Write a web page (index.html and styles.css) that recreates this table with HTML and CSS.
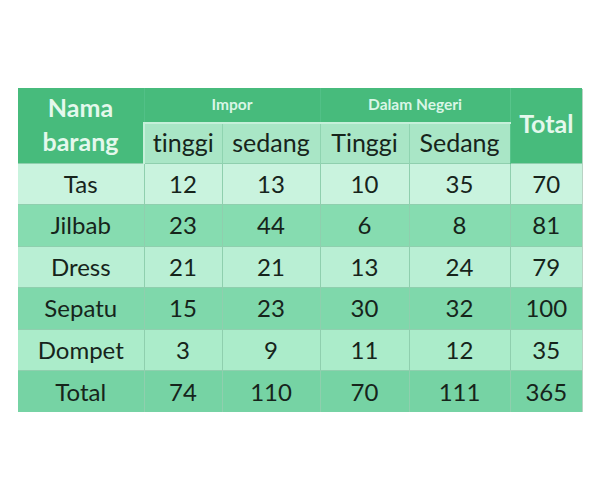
FILE: index.html
```html
<!DOCTYPE html>
<html>
<head>
<meta charset="utf-8">
<link rel="stylesheet" href="styles.css">
</head>
<body>
<div class="page">
<table class="data">
  <colgroup>
    <col class="c-name"><col class="c-a"><col class="c-b"><col class="c-c"><col class="c-d"><col class="c-tot">
  </colgroup>
  <thead>
    <tr class="h1">
      <th rowspan="2" class="hname">Nama<br>barang</th>
      <th colspan="2" class="group">Impor</th>
      <th colspan="2" class="group">Dalam Negeri</th>
      <th rowspan="2" class="htot">Total</th>
    </tr>
    <tr class="h2">
      <th class="sub first">tinggi</th>
      <th class="sub">sedang</th>
      <th class="sub">Tinggi</th>
      <th class="sub last">Sedang</th>
    </tr>
  </thead>
  <tbody>
    <tr class="light1"><td>Tas</td><td>12</td><td>13</td><td>10</td><td>35</td><td>70</td></tr>
    <tr class="dark1"><td>Jilbab</td><td>23</td><td>44</td><td>6</td><td>8</td><td>81</td></tr>
    <tr class="light2"><td>Dress</td><td>21</td><td>21</td><td>13</td><td>24</td><td>79</td></tr>
    <tr class="dark2"><td>Sepatu</td><td>15</td><td>23</td><td>30</td><td>32</td><td>100</td></tr>
    <tr class="light3"><td>Dompet</td><td>3</td><td>9</td><td>11</td><td>12</td><td>35</td></tr>
    <tr class="dark3"><td>Total</td><td>74</td><td>110</td><td>70</td><td>111</td><td>365</td></tr>
  </tbody>
</table>
</div>
</body>
</html>
```
FILE: styles.css
```css
html, body {
  margin: 0;
  padding: 0;
  background: #ffffff;
}
.page {
  padding: 88px 18px 0 18px;
}
.data {
  border-collapse: collapse;
  table-layout: fixed;
  width: 564px;
  font-family: Lato, "Open Sans", sans-serif;
  font-variant-ligatures: none;
  color: #16241b;
  box-shadow: 1px 1px 0 #b9d2c4;
}
.c-name { width: 126px; }
.c-a { width: 78px; }
.c-b { width: 98px; }
.c-c { width: 89px; }
.c-d { width: 101px; }
.c-tot { width: 72px; }

th, td {
  padding: 0;
  text-align: center;
  vertical-align: middle;
}
thead th {
  background: #47bb7c;
}
.h1 { height: 35px; }
.h2 { height: 40px; }
.hname {
  color: #e4f8ec;
  font-weight: 700;
  font-size: 25px;
  line-height: 34px;
  padding-bottom: 2px;
}
.htot {
  color: #e4f8ec;
  font-weight: 700;
  font-size: 25px;
  padding-bottom: 4px;
  border-left: 1px solid #58c48b;
}
.group {
  color: #d9f6e6;
  font-weight: 700;
  font-size: 15.5px;
  padding-bottom: 3px;
  border-left: 1px solid #52c087;
}
.sub {
  background: #a9e6c6;
  font-weight: 400;
  font-size: 25px;
  color: #16241b;
  border-top: 2px solid #c6f0da;
  border-left: 1px solid #8fd4b0;
  padding-bottom: 2px;
}
thead .sub.first { border-left: 2px solid #c6f0da; }
thead .sub.last { border-right: 1px solid #c6f0da; }

tbody tr { height: 41.5px; }
tbody td {
  font-size: 24px;
  border-left: 1px solid #8fcfae;
  border-top: 1px solid #8fcfae;
  padding-bottom: 1px;
}
tbody td:first-child { border-left: none; }
.light1 td { background: #c9f3de; }
.dark1 td { background: #86dcb0; }
.light2 td { background: #b9efd4; }
.dark2 td { background: #7fd8ab; }
.light3 td { background: #abecca; }
.dark3 td { background: #76d3a4; }
```
